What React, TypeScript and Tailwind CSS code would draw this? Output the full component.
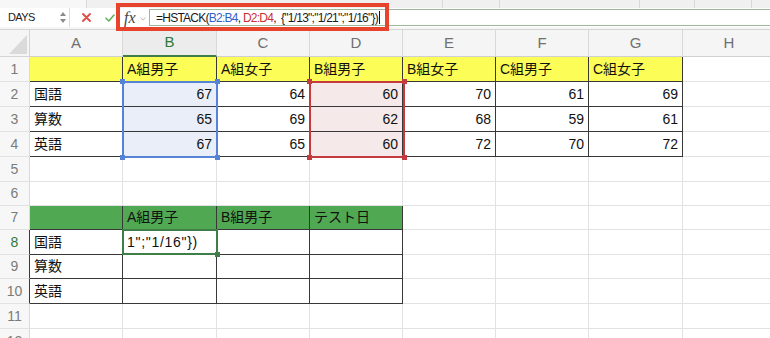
import React from "react";

type Spec = { text?: string; right?: boolean; bg: string; dark: boolean; wide?: boolean };

const COLS = ["A", "B", "C", "D", "E", "F", "G", "H"];
const T1H = ["", "A組男子", "A組女子", "B組男子", "B組女子", "C組男子", "C組女子"];
const T1: (string | number)[][] = [
  ["国語", 67, 64, 60, 70, 61, 69],
  ["算数", 65, 69, 62, 68, 59, 61],
  ["英語", 67, 65, 60, 72, 70, 72],
];
const T2H = ["", "A組男子", "B組男子", "テスト日"];
const T2L = ["国語", "算数", "英語"];

function spec(r: number, c: number): Spec {
  if (r >= 1 && r <= 4 && c <= 6) {
    if (r === 1) return { text: T1H[c], bg: "bg-[#fdfd57]", dark: true };
    const v = T1[r - 2][c];
    let bg = "bg-white";
    if (c === 1) bg = "bg-[#e9eef9]";
    if (c === 3) bg = "bg-[#f6e9e9]";
    return { text: String(v), right: typeof v === "number", bg, dark: true };
  }
  if (r >= 7 && r <= 10 && c <= 3) {
    if (r === 7) return { text: T2H[c], bg: "bg-[#51a852]", dark: true };
    if (c === 0) return { text: T2L[r - 8], bg: "bg-white", dark: true };
    if (r === 8 && c === 1) return { text: "1\";\"1/16\"})", bg: "bg-white", dark: true, wide: true };
    return { bg: "bg-white", dark: true };
  }
  return { bg: "bg-white", dark: false };
}

function Handle({ pos, color }: { pos: string; color: string }) {
  return <div className={`absolute w-[5px] h-[5px] ${pos} ${color}`} />;
}

function TopStrip() {
  return (
    <div className="flex h-[8px] bg-[#f0f0f0]">
      <div className="w-[87px] bg-[#f7f7f7] border-r border-[#d9d9d9]" />
      <div className="w-[356px] border-r border-[#d9d9d9]" />
      <div className="w-[57px] border-r border-[#d9d9d9]" />
      <div className="w-[140px] border-r border-[#d9d9d9]" />
      <div className="w-[55px] border-r border-[#d9d9d9]" />
      <div className="w-[57px] border-r border-[#d9d9d9]" />
      <div className="flex-1" />
    </div>
  );
}

function FormulaBar() {
  return (
    <div className="flex h-[19px] bg-white">
      <div className="w-[70px] h-full bg-white border-r border-[#dcdcdc] flex items-center justify-between pl-[8px] pr-[3px]">
        <span className="text-[11px] text-[#222] leading-none tracking-[-0.6px]">DAYS</span>
        <div className="flex flex-col gap-[3px]">
          <svg width="6" height="4" viewBox="0 0 6 4"><path d="M0 4 L3 0 L6 4 Z" fill="#8a8a8a" /></svg>
          <svg width="6" height="4" viewBox="0 0 6 4"><path d="M0 0 L3 4 L6 0 Z" fill="#8a8a8a" /></svg>
        </div>
      </div>
      <div className="w-[46px] h-full flex items-center">
        <svg className="ml-[12px]" width="9" height="9" viewBox="0 0 9 9">
          <path d="M1 1 L8 8 M8 1 L1 8" stroke="#df4a42" strokeWidth="1.8" strokeLinecap="round" />
        </svg>
        <svg className="ml-[14px]" width="10" height="8" viewBox="0 0 10 8">
          <path d="M1 4.2 L3.8 7 L9 1" stroke="#62b25c" strokeWidth="1.6" fill="none" strokeLinecap="round" strokeLinejoin="round" />
        </svg>
      </div>
      <div className="w-[33px] h-full flex items-center pl-[8px]">
        <span className="italic text-[16px] leading-none text-[#444] font-['Liberation_Serif',serif]">fx</span>
        <svg className="ml-[4px] mt-[2px]" width="6" height="4" viewBox="0 0 6 4">
          <path d="M0.5 0.5 L3 3.2 L5.5 0.5" stroke="#b8b8b8" strokeWidth="1" fill="none" />
        </svg>
      </div>
      <div className="flex-1 h-[17px] mt-[1px] bg-white border border-r-0 border-[#9db79d] flex items-center pl-[6px] whitespace-pre text-[12px] tracking-[-0.75px] text-[#1a1a1a]">
        <span>=HSTACK(</span>
        <span className="text-[#2f62c8]">B2:B4</span>
        <span>, </span>
        <span className="text-[#cc2f2f]">D2:D4</span>
        <span>{',  {"1/13";"1/21";"1/16"})'}</span>
        <span className="w-[1px] h-[13px] bg-[#111] ml-[1px]" />
      </div>
    </div>
  );
}

function Sheet() {
  const rows = Array.from({ length: 12 }, (_, i) => i + 1);
  return (
    <div className="relative grid w-[776px] grid-cols-[30px_93px_94px_93px_93px_93px_93px_94px_93px] grid-rows-[27px_25px_25px_25px_25px_25px_24px_24px_25px_24px_25px_25px_25px]">
      <div className="relative bg-[#f5f5f5] border-r border-b border-[#d4d4d4]">
        <svg className="absolute left-0 top-0" width="30" height="27" viewBox="0 0 30 27">
          <path d="M27 5 L27 24 L9 24 Z" fill="#dadada" />
        </svg>
      </div>
      {COLS.map((c) =>
        c === "B" ? (
          <div key={c} className="flex items-center justify-center bg-[#ececec] border-r border-[#d9d9d9] border-b-2 border-b-[#3f7f47] text-[15px] text-[#2f7a3b]">
            {c}
          </div>
        ) : (
          <div key={c} className="flex items-center justify-center bg-[#f5f5f5] border-r border-b border-[#d9d9d9] border-b-[#d0d0d0] text-[15px] text-[#707070]">
            {c}
          </div>
        )
      )}
      {rows.map((r) => (
        <React.Fragment key={r}>
          <div
            className={`flex items-center justify-center bg-[#f7f7f7] border-r border-b border-b-[#e2e2e2] text-[14px] ${
              r >= 8 && r <= 10 ? "border-r-[#383838]" : "border-r-[#dadada]"
            } ${r === 8 ? "text-[#2f7a3b] bg-[#ececec]" : "text-[#7b7b7b]"}`}
          >
            {r}
          </div>
          {COLS.map((_, ci) => {
            const s = spec(r, ci);
            return (
              <div
                key={ci}
                className={`flex items-center overflow-hidden whitespace-nowrap border-r border-b text-[14px] text-[#111] ${
                  s.dark ? "border-[#383838]" : "border-[#e2e2e2]"
                } ${s.bg} ${s.right ? "justify-end pr-[4px]" : "pl-[4px]"} ${s.wide ? "tracking-[0.7px]" : ""}`}
              >
                {s.text}
              </div>
            );
          })}
        </React.Fragment>
      ))}

      <div className="absolute left-[122px] top-[51px] w-[96px] h-[77px] border-2 border-[#5683d5] pointer-events-none">
        <Handle pos="-left-[4px] -top-[4px]" color="bg-[#5683d5]" />
        <Handle pos="-right-[4px] -top-[4px]" color="bg-[#5683d5]" />
        <Handle pos="-left-[4px] -bottom-[4px]" color="bg-[#5683d5]" />
        <Handle pos="-right-[4px] -bottom-[4px]" color="bg-[#5683d5]" />
      </div>
      <div className="absolute left-[309px] top-[51px] w-[96px] h-[77px] border-2 border-[#c33b3e] pointer-events-none">
        <Handle pos="-left-[4px] -top-[4px]" color="bg-[#c33b3e]" />
        <Handle pos="-right-[4px] -top-[4px]" color="bg-[#c33b3e]" />
        <Handle pos="-left-[4px] -bottom-[4px]" color="bg-[#c33b3e]" />
        <Handle pos="-right-[4px] -bottom-[4px]" color="bg-[#c33b3e]" />
      </div>
      <div className="absolute left-[122px] top-[199px] w-[96px] h-[26px] border-2 border-[#3f7e47] pointer-events-none">
        <Handle pos="-right-[4px] -bottom-[4px]" color="bg-[#3f7e47]" />
      </div>
    </div>
  );
}

export default function App() {
  return (
    <div className="relative w-[770px] h-[338px] overflow-hidden bg-white font-['Liberation_Sans','Noto_Sans_CJK_JP',sans-serif]">
      <TopStrip />
      <FormulaBar />
      <div className="h-[3px] bg-[#f6f6f6] border-b border-[#d4d4d4]" />
      <Sheet />
      <div className="absolute left-[116px] top-[3px] w-[273px] h-[28px] border-4 border-[#e8432c] pointer-events-none" />
    </div>
  );
}
